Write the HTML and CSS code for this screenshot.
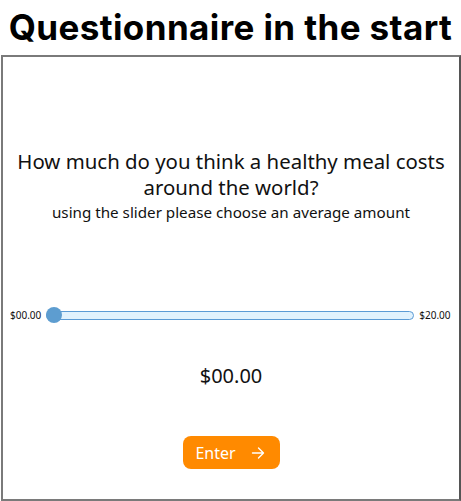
FILE: index.html
```html
<!DOCTYPE html>
<html lang="en">
<head>
<meta charset="utf-8">
<link rel="stylesheet" href="styles.css">
<title>Questionnaire</title>
</head>
<body>
<h1 class="title">Questionnaire in the start</h1>
<div class="box">
  <div class="question">
    <p class="q-main">How much do you think a healthy meal costs around the world?</p>
    <p class="q-sub">using the slider please choose an average amount</p>
  </div>
  <div class="slider-row">
    <span class="s-label">$00.00</span>
    <div class="track"><span class="thumb"></span></div>
    <span class="s-label">$20.00</span>
  </div>
  <div class="value">$00.00</div>
  <button class="enter">Enter <span class="arrow"><svg width="14" height="14" viewBox="0 0 14 14" fill="none" stroke="#fff" stroke-width="1.4" stroke-linecap="round" stroke-linejoin="round"><path d="M1.5 7h11M7.5 2l5 5-5 5"/></svg></span></button>
</div>
</body>
</html>
```
FILE: styles.css
```css
* { box-sizing: border-box; }
html, body { margin: 0; padding: 0; background: #fff; }
body { width: 461px; height: 501px; overflow: hidden; font-family: "Noto Sans", "Open Sans", sans-serif; color: #111; }
.title {
  margin: 0;
  height: 55px;
  font-family: Inter, "Liberation Sans", sans-serif;
  font-weight: 700;
  font-size: 35px;
  line-height: 55px;
  text-align: center;
  color: #000;
  letter-spacing: 0.4px;
  white-space: nowrap;
}
.box {
  margin-left: 1px;
  width: 460px;
  height: 446px;
  border: 2px solid #7a7a7a;
  border-right-color: #555;
  display: flex;
  flex-direction: column;
  align-items: center;
}
.question { margin-top: 92px; text-align: center; width: 100%; }
.q-main { margin: 0 auto; width: 440px; font-size: 20.4px; line-height: 25.5px; color: #111; }
.q-sub { margin: 0; font-size: 15.2px; line-height: 24px; color: #111; }
.slider-row {
  margin-top: 84px;
  width: 100%;
  display: flex;
  align-items: center;
  padding: 0 0 0 7px;
  gap: 5px;
}
.s-label { font-size: 10px; color: #111; font-family: "Noto Sans", sans-serif; }
.track {
  position: relative;
  width: 368px;
  height: 9px;
  border: 1px solid #5b9bd5;
  border-radius: 5px;
  background: #e1f2fd;
}
.thumb {
  position: absolute;
  left: -1px;
  top: 50%;
  width: 16px;
  height: 16px;
  margin-top: -8px;
  border-radius: 50%;
  background: #5d9dd0;
}
.value { margin-top: 41px; font-size: 20px; line-height: 26px; color: #111; }
.enter {
  margin-top: 47px;
  width: 97px;
  height: 33px;
  border: none;
  border-radius: 8px;
  background: #ff8a00;
  color: #fff;
  font-family: "Noto Sans", sans-serif;
  font-size: 16px;
  display: flex;
  align-items: center;
  justify-content: center;
  gap: 15px;
  padding: 0 2px 0 0;
}
.arrow { display: flex; }
```
